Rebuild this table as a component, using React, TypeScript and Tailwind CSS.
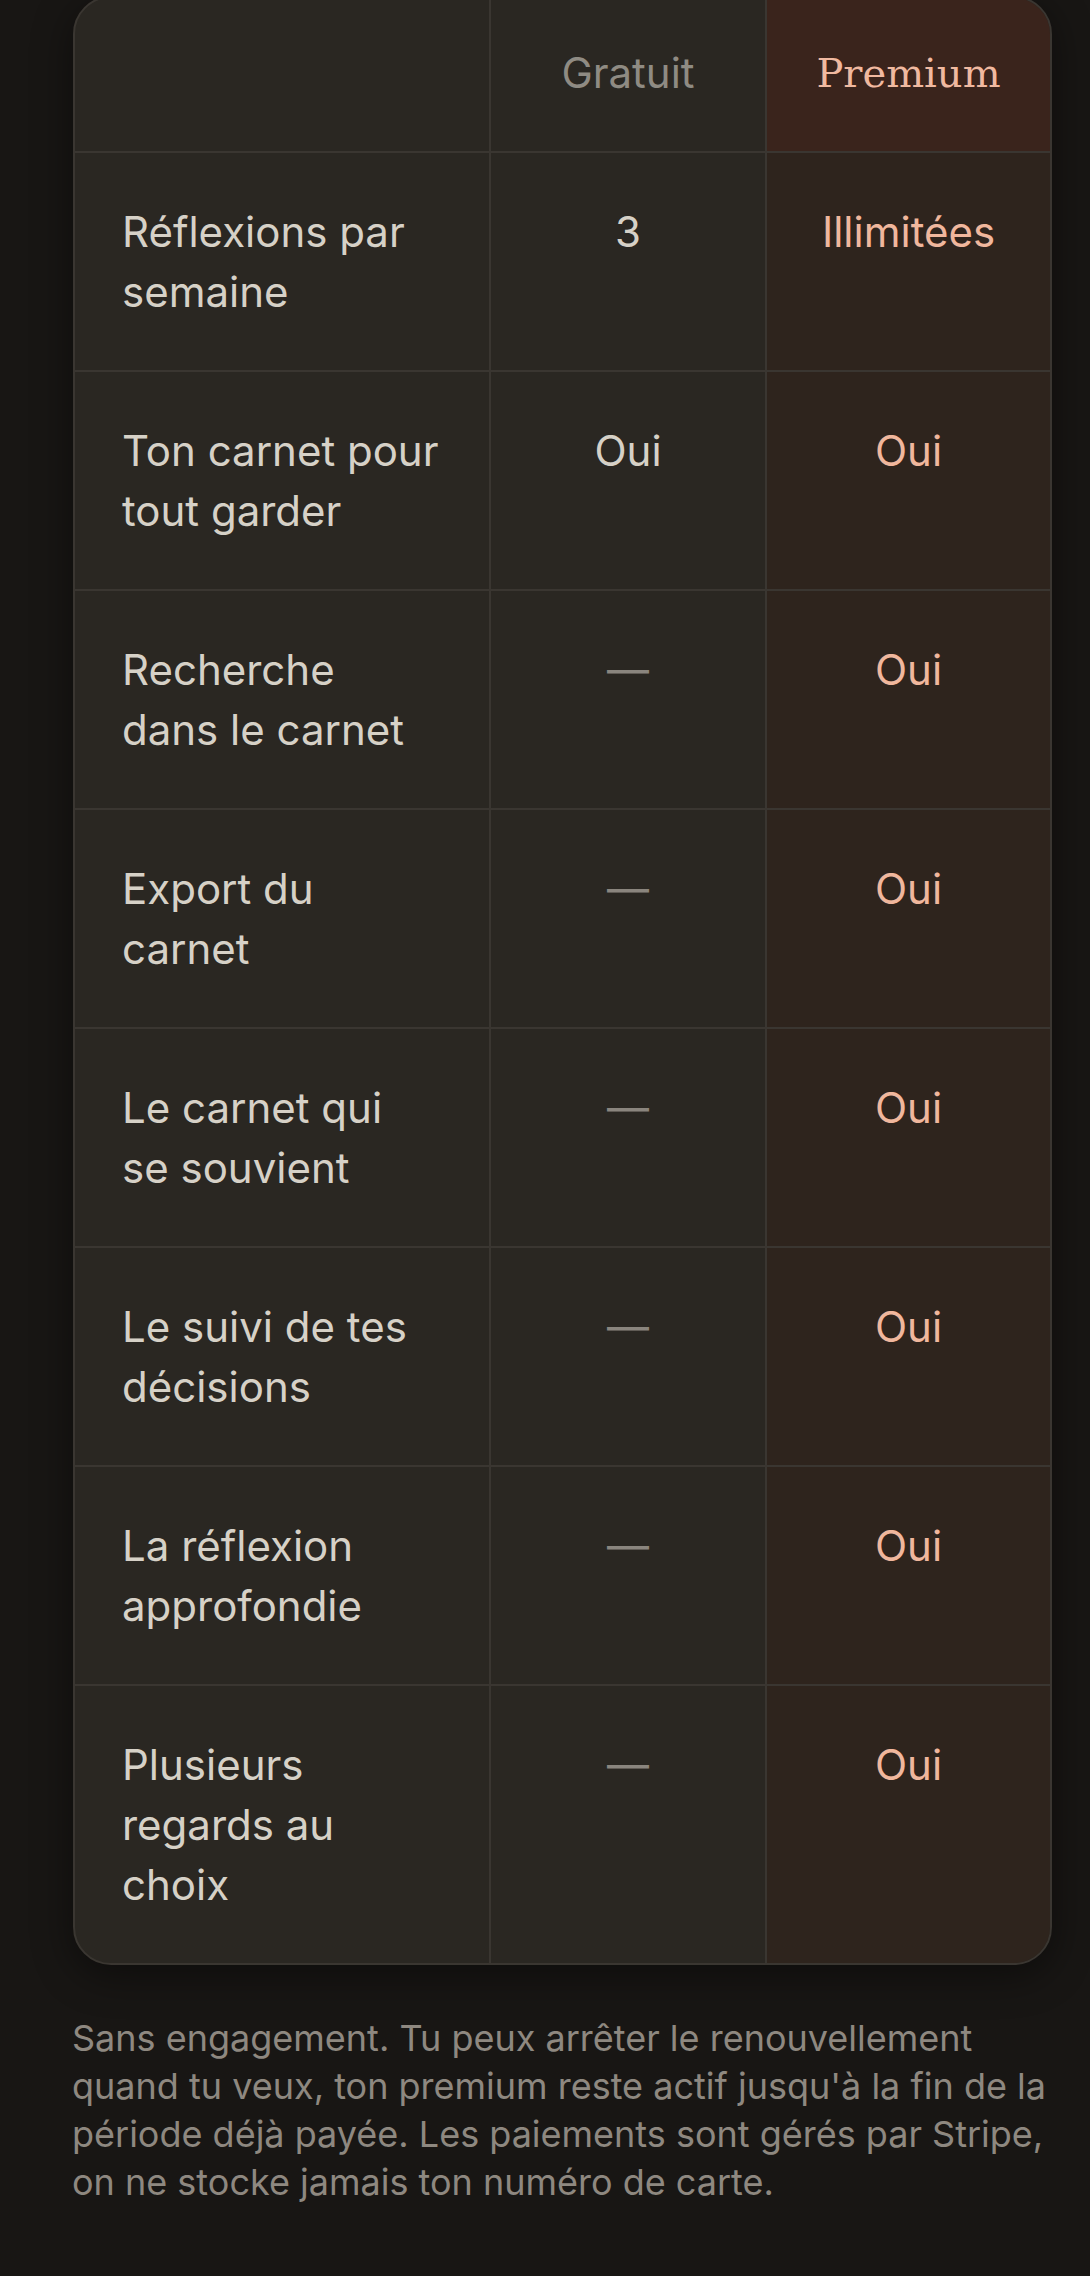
import React from "react";

type Row = { label: string[]; free: string; prem: string };

const rows: Row[] = [
  { label: ["Réflexions par", "semaine"], free: "3", prem: "Illimitées" },
  { label: ["Ton carnet pour", "tout garder"], free: "Oui", prem: "Oui" },
  { label: ["Recherche", "dans le carnet"], free: "—", prem: "Oui" },
  { label: ["Export du", "carnet"], free: "—", prem: "Oui" },
  { label: ["Le carnet qui", "se souvient"], free: "—", prem: "Oui" },
  { label: ["Le suivi de tes", "décisions"], free: "—", prem: "Oui" },
  { label: ["La réflexion", "approfondie"], free: "—", prem: "Oui" },
  { label: ["Plusieurs", "regards au", "choix"], free: "—", prem: "Oui" },
];

export default function App() {
  return (
    <div className="min-h-[2276px] w-full bg-[#181614] [font-family:Inter,'Noto_Sans',sans-serif] overflow-hidden">
      <div className="ml-[73px] mt-[-4px] w-[979px] rounded-[38px] border-2 border-[#3a3631] bg-[#2a2722] overflow-hidden shadow-[0_10px_40px_rgba(0,0,0,0.45)]">
        {/* Header */}
        <div className="grid grid-cols-[416px_276px_283px] border-b-2 border-[#3a3631]">
          <div className="border-r-2 border-[#3a3631]" />
          <div className="border-r-2 border-[#3a3631] pt-[45px] pb-[48px] text-center text-[42px] leading-[60px] text-[#8f8b83]">
            Gratuit
          </div>
          <div className="bg-[#3a241c] pt-[45px] pb-[48px] text-center text-[40px] leading-[60px] text-[#f0b9a0] [font-family:'DejaVu_Serif','Liberation_Serif',serif]">
            Premium
          </div>
        </div>
        {rows.map((r, i) => (
          <div
            key={i}
            className={
              "grid grid-cols-[416px_276px_283px] " +
              (i < rows.length - 1 ? "border-b-2 border-[#3a3631]" : "")
            }
          >
            <div className="border-r-2 border-[#3a3631] pl-[47px] pt-[49px] pb-[48px] text-[42px] leading-[60px] text-[#d6d1c7]">
              {r.label.map((l, j) => (
                <div key={j}>{l}</div>
              ))}
            </div>
            <div
              className={
                "border-r-2 border-[#3a3631] pt-[49px] pb-[48px] text-center text-[42px] leading-[60px] " +
                (r.free === "—" ? "text-[#8a857e]" : "text-[#d6d1c7]")
              }
            >
              {r.free}
            </div>
            <div className="bg-[#2e241d] pt-[49px] pb-[48px] text-center text-[42px] leading-[60px] text-[#f0b79d]">
              {r.prem}
            </div>
          </div>
        ))}
      </div>
      <p className="ml-[72px] mt-[49px] w-[980px] text-[36px] leading-[48px] text-[#8e8880]">
        Sans engagement. Tu peux arrêter le renouvellement quand tu veux, ton premium reste actif jusqu'à la fin de la période déjà payée. Les paiements sont gérés par Stripe, on ne stocke jamais ton numéro de carte.
      </p>
    </div>
  );
}
